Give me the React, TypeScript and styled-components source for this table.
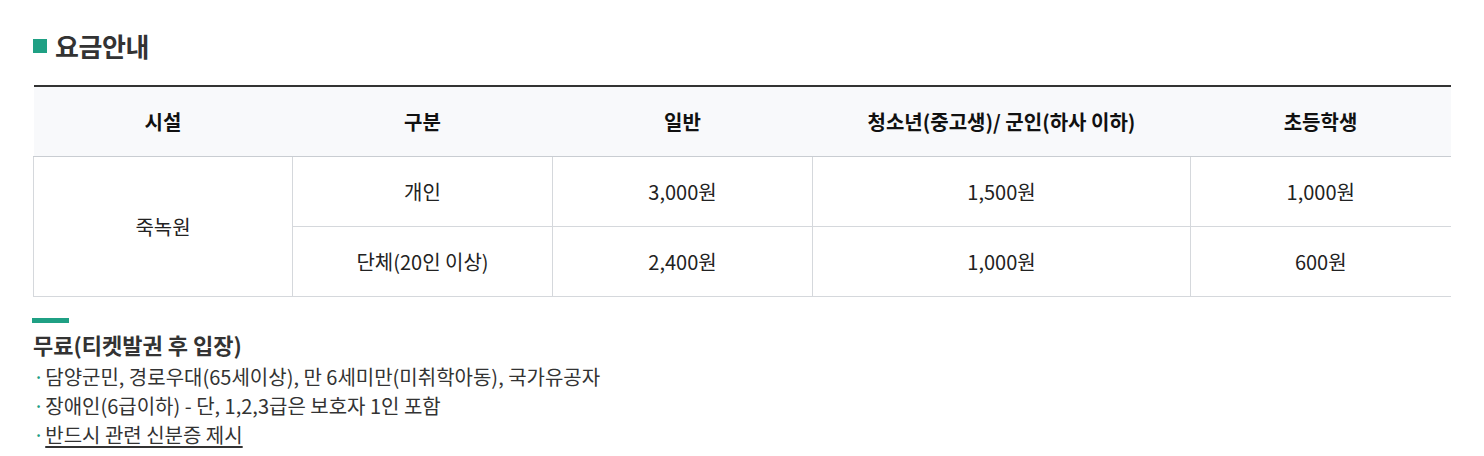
import React from 'react';
import styled, { createGlobalStyle } from 'styled-components';

const GlobalStyle = createGlobalStyle`
    body {
        margin: 0;
        background: #fff;
        font-family: "Noto Sans CJK KR", "Noto Sans", sans-serif;
        color: #222;
    }
`;

const Page = styled.div`
    padding: 28px 0 0 33px;
    width: 1417px;
`;

const Title = styled.h2`
    display: flex;
    align-items: center;
    gap: 8px;
    margin: 0 0 21px;
    font-size: 26px;
    font-weight: 700;
    color: #333;
    line-height: 36px;
    letter-spacing: -0.4px;

    &::before {
        content: '';
        width: 14px;
        height: 14px;
        background: #1fa084;
    }
`;

const Table = styled.table`
    width: 100%;
    border-collapse: collapse;
    border-top: 2px solid #333;
    table-layout: fixed;
`;

const Th = styled.th`
    height: 69px;
    padding: 0;
    background: #f8f9fb;
    font-size: 20px;
    font-weight: 700;
    color: #111;
    border-bottom: 1px solid #c9cdd2;
`;

const Td = styled.td<{ $first?: boolean; $last?: boolean }>`
    height: 69px;
    padding: 0;
    text-align: center;
    font-size: 20px;
    color: #222;
    border-bottom: 1px solid #d5d8dc;
    border-left: ${({ $first }) => ($first ? '1px solid #d5d8dc' : 'none')};
    border-right: ${({ $last }) => ($last ? 'none' : '1px solid #d5d8dc')};
`;

const Notice = styled.div`
    margin-top: 21px;

    &::before {
        content: '';
        display: block;
        width: 37px;
        height: 5px;
        margin-left: -1px;
        background: #1fa084;
    }
`;

const NoticeTitle = styled.h3`
    margin: 4px 0 0;
    font-size: 22px;
    font-weight: 700;
    color: #333;
    line-height: 35px;
`;

const List = styled.ul`
    margin: 0;
    padding: 0;
    list-style: none;
`;

const Item = styled.li<{ $underline?: boolean }>`
    font-size: 20px;
    line-height: 29px;
    color: #333;

    &::before {
        content: '·';
        color: #1fa084;
        margin-right: 1px;
    }

    & > span {
        text-decoration: ${({ $underline }) => ($underline ? 'underline' : 'none')};
        text-underline-offset: 3px;
    }
`;

const headers = ['시설', '구분', '일반', '청소년(중고생)/ 군인(하사 이하)', '초등학생'];
const widths = [259, 260, 260, 378, 260];

const rows = [
    { type: '개인', prices: ['3,000원', '1,500원', '1,000원'] },
    { type: '단체(20인 이상)', prices: ['2,400원', '1,000원', '600원'] },
];

export default function App() {
    return (
        <Page>
            <GlobalStyle />
            <Title>요금안내</Title>
            <Table>
                <colgroup>
                    {widths.map((w, i) => (
                        <col key={i} style={{ width: w }} />
                    ))}
                </colgroup>
                <thead>
                    <tr>
                        {headers.map((h) => (
                            <Th key={h}>{h}</Th>
                        ))}
                    </tr>
                </thead>
                <tbody>
                    {rows.map((r, ri) => (
                        <tr key={r.type}>
                            {ri === 0 && (
                                <Td $first rowSpan={2}>
                                    죽녹원
                                </Td>
                            )}
                            <Td>{r.type}</Td>
                            {r.prices.map((p, i) => (
                                <Td key={i} $last={i === r.prices.length - 1}>
                                    {p}
                                </Td>
                            ))}
                        </tr>
                    ))}
                </tbody>
            </Table>
            <Notice>
                <NoticeTitle>무료(티켓발권 후 입장)</NoticeTitle>
                <List>
                    <Item><span>담양군민, 경로우대(65세이상), 만 6세미만(미취학아동), 국가유공자</span></Item>
                    <Item><span>장애인(6급이하) - 단, 1,2,3급은 보호자 1인 포함</span></Item>
                    <Item $underline><span>반드시 관련 신분증 제시</span></Item>
                </List>
            </Notice>
        </Page>
    );
}
